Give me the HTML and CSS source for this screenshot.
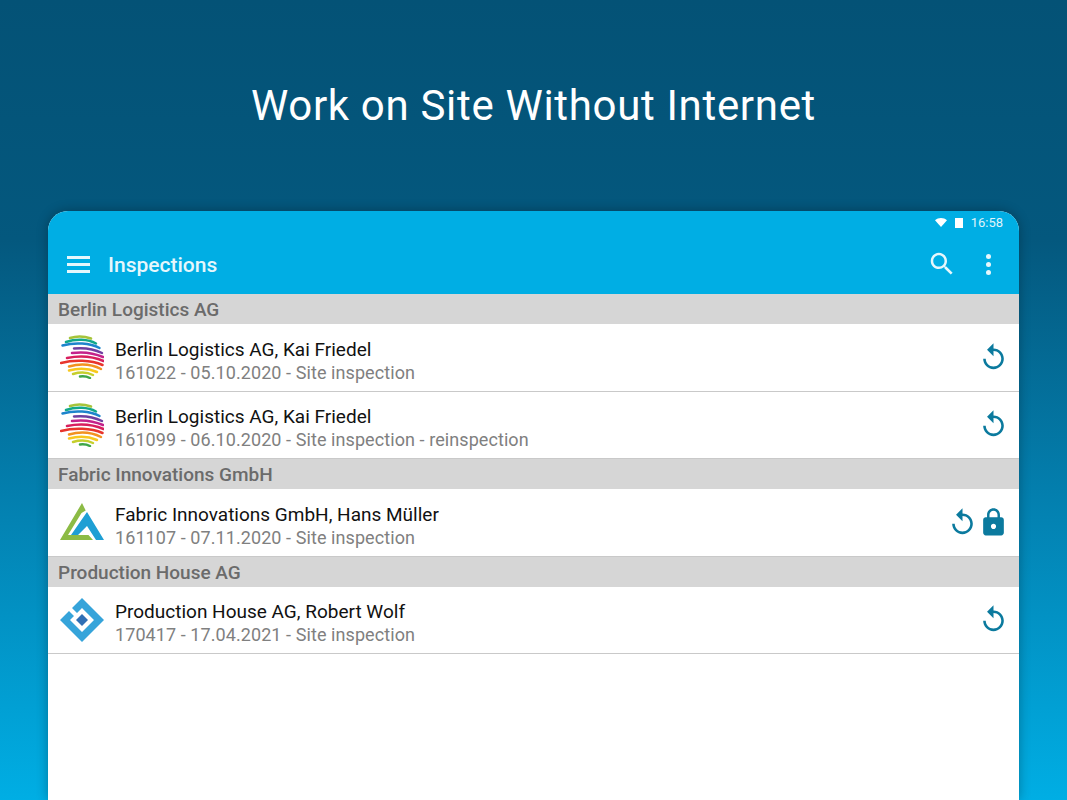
FILE: index.html
```html
<!DOCTYPE html>
<html lang="en">
<head>
    <meta charset="UTF-8">
    <meta name="viewport" content="width=device-width, initial-scale=1.0">
    <title>Work on Site Without Internet</title>
    <link rel="stylesheet" href="styles.css">
</head>
<body>
    <svg class="defs" aria-hidden="true">
        <symbol id="replay" viewBox="0 0 24 24">
            <path d="M12 5V1L7 6l5 5V7c3.31 0 6 2.69 6 6s-2.69 6-6 6-6-2.69-6-6H4c0 4.42 3.58 8 8 8s8-3.58 8-8-3.58-8-8-8z"/>
        </symbol>
        <symbol id="lock" viewBox="0 0 24 24">
            <path d="M18 8h-1V6c0-2.76-2.24-5-5-5S7 3.24 7 6v2H6c-1.1 0-2 .9-2 2v10c0 1.1.9 2 2 2h12c1.1 0 2-.9 2-2V10c0-1.1-.9-2-2-2zm-6 9c-1.1 0-2-.9-2-2s.9-2 2-2 2 .9 2 2-.9 2-2 2zm3.1-9H8.9V6c0-1.71 1.39-3.1 3.1-3.1 1.71 0 3.1 1.39 3.1 3.1v2z"/>
        </symbol>
        <symbol id="globe" viewBox="0 0 44 44">
            <g fill="none" stroke-width="2.500" stroke-linecap="round">
                <path stroke="#a6c43a" d="M10 3C16 1 24 1 31 3.500"/>
                <path stroke="#12a88a" d="M6 7C16 3.500 28 4 36 8.500"/>
                <path stroke="#1d84cc" d="M2.500 10.500C15 7 30 8 39.500 13"/>
                <path stroke="#6f3fa0" d="M14 13.500C24 12.500 34 14 42 18"/>
                <path stroke="#c4228a" d="M12 18C23 16.500 34 18 43 22"/>
                <path stroke="#d81f5e" d="M7 23C19 20.500 33 21.500 43.500 26"/>
                <path stroke="#e8352c" d="M1 28C14 24.500 31 25 42.500 30"/>
                <path stroke="#f29220" d="M9 31.500C20 28.500 32 29.500 41 34"/>
                <path stroke="#f7c81e" d="M9 35.500C18 33 29 33.500 37 37"/>
                <path stroke="#c5cf2d" d="M13 39C20 37 28 37.500 33 40"/>
                <path stroke="#3fa648" d="M20 41.500C24 41 27 41.500 30 43"/>
            </g>
        </symbol>
        <symbol id="peak" viewBox="0 0 44 40">
            <path fill="#8cbb45" d="M22 1 0 38H33L28.500 33H8L21.500 11 25.700 8.500z"/>
            <path fill="#1e9fd4" d="M27 10 44 38H36L27 24 18 33H11z"/>
        </symbol>
        <symbol id="diamond" viewBox="0 0 44 44">
            <path fill="#36a4da" d="M22 0 44 22 22 44 0 22 9 13 14 18 10 22 22 34 34 22 22 10 17 15 12 10z"/>
            <path fill="#2f6fb5" d="M22 16 28 22 22 28 16 22z"/>
        </symbol>
    </svg>

    <h1 class="headline">Work on Site Without Internet</h1>

    <div class="tablet">
        <div class="appbar">
            <div class="status">
                <svg class="wifi" viewBox="0 0 12 9"><path d="M0 2.200C3.400-.7 8.600-.7 12 2.200L6 9z"/></svg>
                <span class="battery"></span>
                <span class="clock">16:58</span>
            </div>
            <div class="toolbar">
                <span class="burger"><i></i><i></i><i></i></span>
                <span class="title">Inspections</span>
                <svg class="search" viewBox="0 0 24 24"><path d="M15.500 14h-.79l-.28-.27C15.410 12.590 16 11.110 16 9.500 16 5.910 13.090 3 9.500 3S3 5.910 3 9.500 5.910 16 9.500 16c1.610 0 3.090-.59 4.230-1.570l.27.28v.79l5 4.990L20.490 19l-4.990-5zm-6 0C7.010 14 5 11.990 5 9.500S7.010 5 9.500 5 14 7.010 14 9.500 11.990 14 9.500 14z"/></svg>
                <span class="more"><i></i><i></i><i></i></span>
            </div>
        </div>

        <div class="group">Berlin Logistics AG</div>
        <div class="row">
            <svg class="logo"><use href="#globe"/></svg>
            <div class="info">
                <div class="name">Berlin Logistics AG, Kai Friedel</div>
                <div class="meta">161022 - 05.10.2020 - Site inspection</div>
            </div>
            <svg class="act"><use href="#replay"/></svg>
        </div>
        <div class="row">
            <svg class="logo"><use href="#globe"/></svg>
            <div class="info">
                <div class="name">Berlin Logistics AG, Kai Friedel</div>
                <div class="meta">161099 - 06.10.2020 - Site inspection - reinspection</div>
            </div>
            <svg class="act"><use href="#replay"/></svg>
        </div>

        <div class="group">Fabric Innovations GmbH</div>
        <div class="row">
            <svg class="logo"><use href="#peak"/></svg>
            <div class="info">
                <div class="name">Fabric Innovations GmbH, Hans Müller</div>
                <div class="meta">161107 - 07.11.2020 - Site inspection</div>
            </div>
            <svg class="act"><use href="#replay"/></svg>
            <svg class="act"><use href="#lock"/></svg>
        </div>

        <div class="group">Production House AG</div>
        <div class="row">
            <svg class="logo"><use href="#diamond"/></svg>
            <div class="info">
                <div class="name">Production House AG, Robert Wolf</div>
                <div class="meta">170417 - 17.04.2021 - Site inspection</div>
            </div>
            <svg class="act"><use href="#replay"/></svg>
        </div>
    </div>
</body>
</html>
```

FILE: styles.css
```css
body {
    margin: 0;
    height: 800px;
    overflow: hidden;
    font-family: Roboto, "Liberation Sans", sans-serif;
    background: linear-gradient(180deg, #045276 0%, #04587e 30%, #0383b3 65%, #00aee4 100%);
    display: flex;
    flex-direction: column;
    box-sizing: border-box;
    padding: 0 48px;
}

.defs {
    display: none;
}

.headline {
    margin: 0;
    padding-top: 80px;
    height: 211px;
    flex: none;
    box-sizing: border-box;
    text-align: center;
    color: #fff;
    font-size: 42px;
    line-height: 52px;
    font-weight: 400;
    letter-spacing: 0.68px;
}

.tablet {
    flex: 1;
    background: #fff;
    border-radius: 20px 20px 0 0;
    overflow: hidden;
    box-shadow: 0 0 12px rgba(0, 0, 0, 0.3);
}

.appbar {
    background: #00aee4;
    height: 83px;
    color: #fff;
}

.status {
    height: 23px;
    display: flex;
    align-items: center;
    justify-content: flex-end;
    padding-right: 16px;
}

.wifi {
    width: 12px;
    height: 9px;
    fill: #fff;
}

.battery {
    width: 8px;
    height: 10px;
    background: #fff;
    margin-left: 8px;
}

.clock {
    font-size: 13px;
    margin-left: 8px;
    color: #dff4fb;
}

.toolbar {
    height: 60px;
    display: flex;
    align-items: center;
    padding: 0 19px;
}

.burger {
    width: 23px;
    display: flex;
    flex-direction: column;
    gap: 4px;
}

.burger i {
    height: 3px;
    background: #e6f7fc;
}

.title {
    flex: 1;
    margin-left: 18px;
    margin-top: 2px;
    font-size: 21px;
    font-weight: 500;
    color: #e6f7fc;
}

.search {
    width: 30px;
    height: 30px;
    fill: #e6f7fc;
}

.more {
    display: flex;
    flex-direction: column;
    gap: 3px;
    margin-left: 29px;
    margin-right: 9px;
}

.more i {
    width: 5px;
    height: 5px;
    border-radius: 50%;
    background: #e6f7fc;
}

.group {
    height: 30px;
    line-height: 31px;
    padding-left: 10px;
    background: #d6d6d6;
    color: #6b6b6b;
    font-size: 19px;
    font-weight: 500;
}

.row {
    height: 67.5px;
    box-sizing: border-box;
    border-bottom: 1px solid #c9c9c9;
    display: flex;
    align-items: center;
    padding: 0 10px 0 12px;
}

.logo {
    width: 44px;
    height: 44px;
    flex: none;
}

.info {
    flex: 1;
    margin-left: 11px;
    padding-top: 5px;
}

.name {
    font-size: 19px;
    line-height: 25px;
    color: #111;
}

.meta {
    font-size: 18px;
    line-height: 21px;
    color: #808080;
    letter-spacing: 0.08px;
}

.act {
    width: 31px;
    height: 31px;
    fill: #0b7a9e;
    flex: none;
}
```
